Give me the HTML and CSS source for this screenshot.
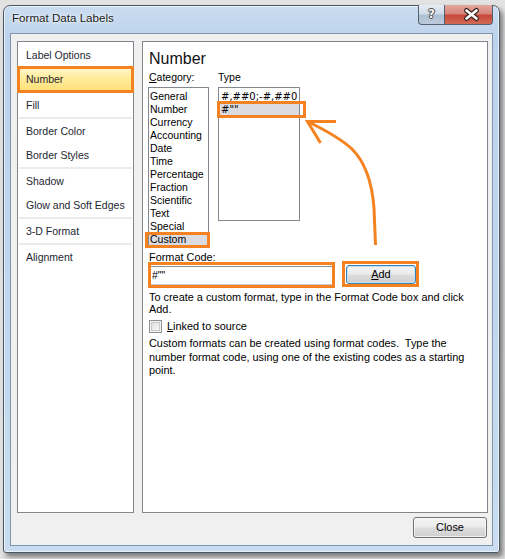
FILE: index.html
```html
<!DOCTYPE html>
<html>
<head>
<meta charset="utf-8">
<link rel="stylesheet" href="styles.css">
</head>
<body>
<div class="window">
  <div class="titlebar">
    <span class="title">Format Data Labels</span>
    <div class="caption-btns">
      <div class="cbtn help"><span class="q">?</span></div>
      <div class="cbtn close">
        <svg width="49" height="19" viewBox="0 0 49 19">
          <path d="M21.5 5.5 L31.5 13.5 M31.5 5.5 L21.5 13.5" stroke="#3b2420" stroke-width="5" stroke-linecap="round" fill="none"/>
          <path d="M21.5 5.5 L31.5 13.5 M31.5 5.5 L21.5 13.5" stroke="#ffffff" stroke-width="2.6" stroke-linecap="round" fill="none"/>
        </svg>
      </div>
    </div>
  </div>
  <div class="client">
    <div class="panels">
      <ul class="nav">
        <li class="nav-item">Label Options</li>
        <li class="nav-item selected">Number</li>
        <li class="gap"></li>
        <li class="nav-item">Fill</li>
        <li class="sep"></li>
        <li class="nav-item">Border Color</li>
        <li class="nav-item">Border Styles</li>
        <li class="sep"></li>
        <li class="nav-item">Shadow</li>
        <li class="nav-item">Glow and Soft Edges</li>
        <li class="sep"></li>
        <li class="nav-item">3-D Format</li>
        <li class="sep"></li>
        <li class="nav-item">Alignment</li>
      </ul>
      <div class="content">
        <h1 class="heading">Number</h1>
        <div class="lists">
          <div class="col cat">
            <div class="lbl cat-lbl"><u>C</u>ategory:</div>
            <ul class="listbox catlist">
              <li>General</li>
              <li>Number</li>
              <li>Currency</li>
              <li>Accounting</li>
              <li>Date</li>
              <li>Time</li>
              <li>Percentage</li>
              <li>Fraction</li>
              <li>Scientific</li>
              <li>Text</li>
              <li>Special</li>
              <li class="sel">Custom</li>
            </ul>
          </div>
          <div class="col type">
            <div class="lbl">Type</div>
            <ul class="listbox typelist">
              <li>#,##0;-#,##0</li>
              <li class="sel">#""</li>
            </ul>
          </div>
        </div>
        <div class="lbl code-lbl">Format Code:</div>
        <div class="code-row">
          <div class="input">#""</div>
          <div class="btn add"><u>A</u>dd</div>
        </div>
        <p class="desc desc1">To create a custom format, type in the Format Code box and click Add.</p>
        <div class="check-row">
          <span class="checkbox"></span>
          <span class="check-lbl"><u>L</u>inked to source</span>
        </div>
        <p class="desc desc2">Custom formats can be created using format codes.&nbsp; Type the number format code, using one of the existing codes as a starting point.</p>
      </div>
    </div>
    <div class="footer">
      <div class="btn close-btn">Close</div>
    </div>
  </div>
</div>

<div class="ann ann-number"></div>
<div class="ann ann-custom"></div>
<div class="ann ann-type"></div>
<div class="ann ann-code"></div>
<div class="ann ann-add"></div>
<svg class="arrow" width="505" height="559" viewBox="0 0 505 559">
  <path d="M375.5 245 L374 208 C372 182 366 163 352 149 C339 137 323 129 307.5 121.5" stroke="#f58220" stroke-width="3" fill="none"/>
  <path d="M336 121.5 L307.5 121.5 L320.5 143" stroke="#f58220" stroke-width="3" fill="none"/>
</svg>
</body>
</html>
```

FILE: styles.css
```css
* {
  margin: 0;
  padding: 0;
  box-sizing: border-box;
}

body {
  width: 505px;
  height: 559px;
  overflow: hidden;
  position: relative;
  background: #e2e2e2;
  font-family: "Liberation Sans", Arial, sans-serif;
  font-size: 10.5px;
  color: #000;
}

.window {
  margin: 5px 0 0 3px;
  width: 497px;
  height: 548px;
  border: 1px solid #4d5866;
  border-radius: 7px 7px 3px 3px;
  background: linear-gradient(180deg, #cadcf0 0%, #bcd3eb 6%, #c2d7ee 60%, #c9dcf1 100%);
  padding: 0 6px 6px;
  display: flex;
  flex-direction: column;
  box-shadow: 3px 4px 5px rgba(0, 0, 0, 0.45), inset 0 0 0 1px rgba(255, 255, 255, 0.6);
}

.titlebar {
  height: 27px;
  display: flex;
  align-items: flex-start;
  flex-shrink: 0;
}

.title {
  margin: 5px 0 0 2px;
  font-size: 11.6px;
  line-height: 14px;
  color: #1b1b1b;
  text-shadow: 0 0 5px rgba(255, 255, 255, 0.95), 0 0 2px rgba(255, 255, 255, 0.9);
}

.caption-btns {
  margin-left: auto;
  margin-top: -1px;
  display: flex;
}

.cbtn {
  height: 20px;
  border: 1px solid #55606e;
  border-top: none;
}

.help {
  width: 26px;
  border-radius: 0 0 0 4px;
  border-right: none;
  background: linear-gradient(180deg, #e6edf5 0%, #cfdbe8 48%, #aebfd2 52%, #bccbdc 100%);
  display: flex;
  justify-content: center;
}

.q {
  font-family: "DejaVu Sans", sans-serif;
  font-weight: bold;
  font-size: 12px;
  line-height: 18px;
  color: #f4f4f4;
  text-shadow: 0 0 1px #333, 1px 0 0 #555, -1px 0 0 #555, 0 1px 0 #555, 0 -1px 0 #555;
}

.close {
  width: 49px;
  border-radius: 0 0 4px 0;
  background: linear-gradient(180deg, #e3a89e 0%, #d8857a 45%, #c6493a 55%, #d26a55 100%);
}

.close svg {
  display: block;
}

.client {
  height: 513px;
  border: 1px solid #8195aa;
  background: #f0f0f0;
  padding: 7px 4px 7px 6px;
  display: flex;
  flex-direction: column;
}

.panels {
  display: flex;
  gap: 8px;
  height: 472px;
}

.nav {
  width: 117px;
  border: 1px solid #828790;
  background: #fff;
  list-style: none;
  padding-top: 1px;
}

.nav-item {
  height: 24px;
  line-height: 24px;
  padding-left: 8px;
  color: #1e2630;
  white-space: nowrap;
}

.nav-item.selected {
  background: linear-gradient(180deg, #fff7d0 0%, #ffec9c 45%, #ffe07a 100%);
}

.gap {
  height: 2px;
}

.sep {
  height: 2px;
  margin: 0 1px;
  background: #ebebeb;
}

.content {
  width: 346px;
  border: 1px solid #828790;
  background: #fff;
  padding: 8px 5px 0;
}

.heading {
  font-size: 16px;
  font-weight: normal;
  line-height: 18px;
  padding-left: 1px;
  color: #111;
}

.lists {
  display: flex;
  gap: 9px;
  margin-top: 3px;
}

.lbl {
  line-height: 13px;
  margin-bottom: 3px;
  white-space: nowrap;
}

.cat-lbl {
  padding-left: 1px;
}

.cat {
  width: 61px;
}

.type {
  width: 82px;
}

.listbox {
  list-style: none;
  border: 1px solid #828790;
  background: #fff;
  padding-top: 2px;
}

.catlist {
  height: 160px;
}

.catlist li {
  height: 13px;
  line-height: 13px;
  padding-left: 1px;
  white-space: nowrap;
}

.typelist {
  height: 134px;
  font-family: "DejaVu Sans", sans-serif;
  font-size: 10px;
}

.typelist li {
  height: 13px;
  line-height: 13px;
  padding-left: 2px;
  white-space: nowrap;
}

.listbox .sel {
  background: #dcdce0;
}

.code-lbl {
  margin-top: 4px;
  margin-bottom: 0;
  padding-left: 1px;
  font-size: 10.9px;
}

.code-row {
  display: flex;
  align-items: flex-start;
  margin-top: 2px;
}

.input {
  margin-left: 2px;
  width: 183px;
  height: 19px;
  border: 1px solid #c5cad1;
  border-top-color: #8c9198;
  background: #fff;
  line-height: 17px;
  padding-left: 1px;
}

.btn {
  border: 1px solid #707070;
  border-radius: 3px;
  background: linear-gradient(180deg, #f3f3f3 0%, #ebebeb 48%, #dddddd 52%, #cfcfcf 100%);
  box-shadow: inset 0 0 0 1px rgba(255, 255, 255, 0.7);
  text-align: center;
  color: #000;
  font-size: 10.9px;
}

.add {
  width: 70px;
  height: 19px;
  line-height: 17px;
  margin-left: 13px;
  margin-top: -1px;
  border-color: #3c7fb1;
  box-shadow: inset 0 0 0 1px #bfe3f8;
}

.desc {
  width: 332px;
  padding-left: 1px;
  font-size: 10.9px;
}

.desc1 {
  margin-top: 6px;
  line-height: 12px;
}

.check-row {
  display: flex;
  align-items: center;
  gap: 5px;
  height: 13px;
  margin-top: 5px;
  padding-left: 1px;
  font-size: 10.9px;
}

.checkbox {
  width: 13px;
  height: 13px;
  border: 1px solid #8e8f8f;
  background: linear-gradient(135deg, #d7d7d7 0%, #f4f4f4 70%, #ffffff 100%);
  box-shadow: inset 0 0 0 1px #f4f4f4, inset 0 0 0 2px #c8c8c8;
}

.check-lbl {
  line-height: 13px;
}

.desc2 {
  margin-top: 4px;
  line-height: 13.5px;
}

.footer {
  margin-top: 4px;
  display: flex;
  justify-content: flex-end;
  padding-right: 1px;
}

.close-btn {
  width: 74px;
  height: 21px;
  line-height: 19px;
}

.ann {
  position: absolute;
  border: 3px solid #f58220;
}

.ann-number {
  left: 17px;
  top: 66px;
  width: 117px;
  height: 27px;
}

.ann-custom {
  left: 145px;
  top: 232px;
  width: 65px;
  height: 16px;
}

.ann-type {
  left: 217px;
  top: 101px;
  width: 89px;
  height: 17px;
}

.ann-code {
  left: 148px;
  top: 262px;
  width: 187px;
  height: 26px;
}

.ann-add {
  left: 342px;
  top: 261px;
  width: 77px;
  height: 26px;
}

.arrow {
  position: absolute;
  left: 0;
  top: 0;
  pointer-events: none;
}
```
